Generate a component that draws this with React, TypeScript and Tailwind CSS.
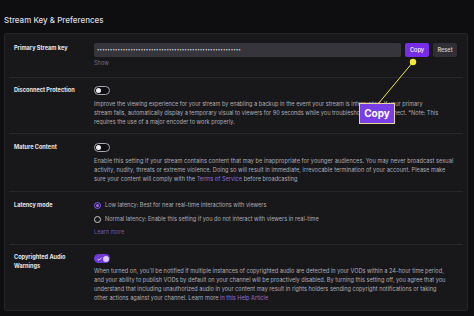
import React from "react";

function Toggle({ on }: { on?: boolean }) {
  if (on) {
    return (
      <div className="relative w-[16px] h-[9px] rounded-full bg-[#6f3ad6] flex items-center">
        <svg width="5" height="4" viewBox="0 0 5 4" className="absolute left-[2.5px] top-[2.5px]">
          <path d="M0.5 2 L2 3.3 L4.5 0.7" stroke="#e9e2ff" strokeWidth="0.9" fill="none" />
        </svg>
        <div className="absolute right-[1.5px] top-[1.5px] w-[6px] h-[6px] rounded-full bg-[#d8c8ff]" />
      </div>
    );
  }
  return (
    <div className="relative w-[16px] h-[9px] rounded-full border border-[#a8a8b3] bg-[#0e0e10]">
      <div className="absolute left-[1px] top-[1px] w-[5px] h-[5px] rounded-full bg-[#efeff1]" />
    </div>
  );
}

function Radio({ on }: { on?: boolean }) {
  return on ? (
    <div className="w-[7px] h-[7px] rounded-full border border-[#8b5cf6] flex items-center justify-center shrink-0">
      <div className="w-[3.5px] h-[3.5px] rounded-full bg-[#9b6cf2]" />
    </div>
  ) : (
    <div className="w-[7px] h-[7px] rounded-full border border-[#c8c8d0] shrink-0" />
  );
}

export default function App() {
  const font = { fontFamily: "Inter, 'Noto Sans', sans-serif" };
  return (
    <div
      className="relative w-[474px] h-[316px] bg-[#0e0e10] overflow-hidden text-[#adadb8]"
      style={font}
    >
      <div className="h-[33px] pl-[4px] pt-[15px] text-[8px] leading-[11px] font-medium text-[#dcdce2]">
        Stream Key &amp; Preferences
      </div>
      <div className="ml-[4px] w-[464px] h-[278px] bg-[#18181b] border border-[#232328] rounded-[2px] px-[4px] flex flex-col">
        {/* Row 1 */}
        <div className="h-[44px] border-b border-[#26262b] flex pl-[5px]">
          <div className="w-[80px] pt-[10px] text-[5.6px] leading-[9px] font-bold text-[#e6e6ea]">
            Primary Stream key
          </div>
          <div className="flex flex-col pt-[9px]">
            <div className="flex items-center gap-[4px]">
              <div className="w-[307px] h-[14px] rounded-[2px] bg-[#35353b] flex items-center pl-[3px] text-[4.4px] tracking-[0.1px] text-[#d4d4da] overflow-hidden whitespace-nowrap">
                ••••••••••••••••••••••••••••••••••••••••••••••••••••••••
              </div>
              <div className="w-[24px] h-[14px] rounded-[2px] bg-[#772ce8] flex items-center justify-center text-[5.6px] font-semibold text-[#ece4ff]">
                Copy
              </div>
              <div className="w-[24px] h-[14px] rounded-[2px] bg-[#2f2f35] flex items-center justify-center text-[5.6px] font-semibold text-[#c8c8d0]">
                Reset
              </div>
            </div>
            <div className="mt-[2px] text-[5.6px] leading-[9px] text-[#6f6f88]">Show</div>
          </div>
        </div>
        {/* Row 2 */}
        <div className="h-[56px] border-b border-[#26262b] flex pl-[5px]">
          <div className="w-[80px] pt-[8px] text-[5.6px] leading-[9px] font-bold text-[#e6e6ea]">
            Disconnect Protection
          </div>
          <div className="flex flex-col pt-[8px]">
            <Toggle />
            <div className="mt-[5px] text-[5.6px] leading-[9px] whitespace-nowrap">
              <div>Improve the viewing experience for your stream by enabling a backup in the event your stream is interrupted. If your primary</div>
              <div>stream fails, automatically display a temporary visual to viewers for 90 seconds while you troubleshoot and reconnect. *Note: This</div>
              <div>requires the use of a major encoder to work properly.</div>
            </div>
          </div>
        </div>
        {/* Row 3 */}
        <div className="h-[58px] border-b border-[#26262b] flex pl-[5px]">
          <div className="w-[80px] pt-[9px] text-[5.6px] leading-[9px] font-bold text-[#e6e6ea]">
            Mature Content
          </div>
          <div className="flex flex-col pt-[9px]">
            <Toggle />
            <div className="mt-[5px] text-[5.6px] leading-[9px] whitespace-nowrap tracking-[0.02px]">
              <div className="tracking-[0.06px]">Enable this setting if your stream contains content that may be inappropriate for younger audiences. You may never broadcast sexual</div>
              <div className="tracking-[0.04px]">activity, nudity, threats or extreme violence. Doing so will result in immediate, irrevocable termination of your account. Please make</div>
              <div>
                sure your content will comply with the <span className="text-[#8f6fd6]">Terms of Service</span> before broadcasting
              </div>
            </div>
          </div>
        </div>
        {/* Row 4 */}
        <div className="h-[53px] border-b border-[#26262b] flex pl-[5px]">
          <div className="w-[80px] pt-[9px] text-[5.6px] leading-[9px] font-bold text-[#e6e6ea]">
            Latency mode
          </div>
          <div className="flex flex-col pt-[9px] text-[5.6px] leading-[9px] whitespace-nowrap">
            <div className="flex items-center gap-[4px]">
              <Radio on />
              <span>Low latency: Best for near real-time interactions with viewers</span>
            </div>
            <div className="mt-[5px] flex items-center gap-[4px]">
              <Radio />
              <span>Normal latency: Enable this setting if you do not interact with viewers in real-time</span>
            </div>
            <div className="mt-[4px] text-[#6f5aa8]">Learn more</div>
          </div>
        </div>
        {/* Row 5 */}
        <div className="flex-1 flex pl-[5px]">
          <div className="w-[80px] pt-[8px] text-[5.6px] leading-[9px] font-bold text-[#e6e6ea]">
            Copyrighted Audio
            <br />
            Warnings
          </div>
          <div className="flex flex-col pt-[9px]">
            <Toggle on />
            <div className="mt-[4px] text-[5.6px] leading-[9px] whitespace-nowrap">
              <div>When turned on, you'll be notified if multiple instances of copyrighted audio are detected in your VODs within a 24-hour time period,</div>
              <div>and your ability to publish VODs by default on your channel will be proactively disabled. By turning this setting off, you agree that you</div>
              <div>understand that including unauthorized audio in your content may result in rights holders sending copyright notifications or taking</div>
              <div>
                other actions against your channel. Learn more <span className="text-[#8f6fd6]">in this Help Article</span>
              </div>
            </div>
          </div>
        </div>
      </div>

      {/* Callout annotation */}
      <svg className="absolute left-0 top-0 pointer-events-none" width="474" height="316">
        <line x1="413" y1="62" x2="378" y2="104" stroke="#f2e94a" strokeWidth="1" />
        <circle cx="413" cy="62" r="3.2" fill="#f5e83a" />
      </svg>
      <div className="absolute left-[359px] top-[103px] w-[36px] h-[21px] bg-[#7a3ee6] border-[1.5px] border-[#e6d79c] flex items-center justify-center text-[10px] font-bold text-white">
        Copy
      </div>
    </div>
  );
}
